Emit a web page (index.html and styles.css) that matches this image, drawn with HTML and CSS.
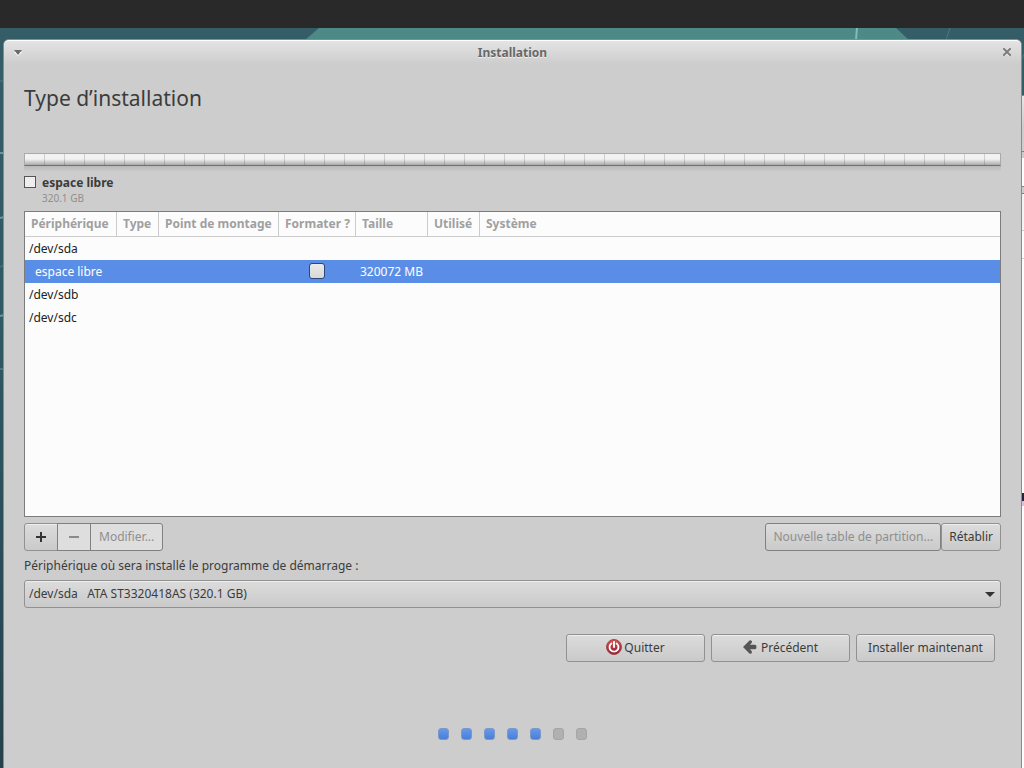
FILE: index.html
```html
<!DOCTYPE html>
<html lang="fr">
<head>
    <meta charset="UTF-8">
    <meta name="viewport" content="width=device-width, initial-scale=1.0">
    <title>Installation</title>
    <link rel="stylesheet" href="styles.css">
</head>
<body>

<div class="panel"></div>

<div class="desktop">
    <!-- Wallpaper -->
    <svg class="wallpaper" viewBox="0 0 1024 740" preserveAspectRatio="none" aria-hidden="true">
        <path d="M305 12 L319 0 H896 L909 12 Z" fill="#4d8a87"/>
        <path d="M857 0 L856 12" stroke="#86bab7" stroke-width="2"/>
        <path d="M950 0 L946 12 M1024 26 L1021 34" stroke="#4c777e" stroke-width="1"/>
        <path d="M0 53 H4 M0 239 L4 237" stroke="#4f7b82" stroke-width="1"/>
        <path d="M0 125 H4 M0 190 L4 189 M0 288 L4 287" stroke="#6b979c" stroke-width="2"/>
        <path d="M0 341 H4" stroke="#6b979c" stroke-width="1"/>
    </svg>

    <!-- Window hidden behind the installer -->
    <div class="back-window">
        <div class="back-title"></div>
        <div class="back-bar"></div>
        <div class="back-line"></div>
        <div class="back-row"></div>
        <div class="back-mark"></div>
    </div>

    <main class="window">
        <header class="titlebar">
            <button class="title-button" aria-label="Menu">
                <svg width="8" height="6" viewBox="0 0 8 6"><path d="M0 2 H8 L4 6 Z" fill="#fff"/><path d="M0 0 H8 L4 5 Z" fill="#6b6b6b"/></svg>
            </button>
            <span class="title">Installation</span>
            <button class="title-button" aria-label="Fermer">
                <svg width="8" height="9" viewBox="0 0 8 9"><path d="M1 2 L7 8 M7 2 L1 8" stroke="#f4f4f4" stroke-width="2"/><path d="M1 1 L7 7 M7 1 L1 7" stroke="#7c7c7c" stroke-width="2" stroke-linecap="square"/></svg>
            </button>
        </header>

        <div class="content">
            <h1>Type d’installation</h1>

            <div class="disk-bar"></div>
            <div class="disk-shadow"></div>

            <div class="legend">
                <span class="swatch"></span>
                <div>
                    <div class="legend-name">espace libre</div>
                    <div class="legend-size">320.1 GB</div>
                </div>
            </div>

            <div class="table-frame">
                <table>
                    <colgroup>
                        <col class="col-device">
                        <col class="col-type">
                        <col class="col-mount">
                        <col class="col-format">
                        <col class="col-size">
                        <col class="col-used">
                        <col>
                    </colgroup>
                    <thead>
                        <tr>
                            <th>Périphérique</th>
                            <th>Type</th>
                            <th>Point de montage</th>
                            <th>Formater ?</th>
                            <th>Taille</th>
                            <th>Utilisé</th>
                            <th>Système</th>
                        </tr>
                    </thead>
                    <tbody>
                        <tr><td colspan="7">/dev/sda</td></tr>
                        <tr class="selected">
                            <td class="child">espace libre</td>
                            <td></td>
                            <td></td>
                            <td class="check"><input type="checkbox" aria-label="Formater espace libre"></td>
                            <td>320072 MB</td>
                            <td></td>
                            <td></td>
                        </tr>
                        <tr><td colspan="7">/dev/sdb</td></tr>
                        <tr><td colspan="7">/dev/sdc</td></tr>
                    </tbody>
                </table>
            </div>

            <div class="tools">
                <div class="joined">
                    <button class="btn icon-btn" aria-label="Ajouter">
                        <svg width="10" height="10" viewBox="0 0 10 10"><path d="M5 0 V10 M0 5 H10" stroke="#333" stroke-width="2"/></svg>
                    </button>
                    <button class="btn icon-btn" disabled aria-label="Supprimer">
                        <svg width="10" height="10" viewBox="0 0 10 10"><path d="M0 5 H10" stroke="#8b8b8b" stroke-width="2"/></svg>
                    </button>
                    <button class="btn text-btn" disabled>Modifier...</button>
                </div>
                <div class="table-actions">
                    <button class="btn text-btn" disabled>Nouvelle table de partition...</button>
                    <button class="btn text-btn">Rétablir</button>
                </div>
            </div>

            <label class="boot-label" for="bootDevice">Périphérique où sera installé le programme de démarrage :</label>
            <div class="combo">
                <select id="bootDevice">
                    <option>/dev/sda&nbsp;&nbsp; ATA ST3320418AS (320.1 GB)</option>
                    <option>/dev/sdb</option>
                    <option>/dev/sdc</option>
                </select>
                <svg class="arrow" width="10" height="5" viewBox="0 0 10 5" aria-hidden="true"><path d="M0 0 H10 L5 5 Z" fill="#333"/></svg>
            </div>

            <div class="nav">
                <button class="btn text-btn">
                    <svg class="quit-icon" width="16" height="16" viewBox="0 0 16 16">
                        <defs>
                            <linearGradient id="red" x1="0" y1="0" x2="0" y2="1">
                                <stop offset="0" stop-color="#d9534a"/>
                                <stop offset="1" stop-color="#8e1f38"/>
                            </linearGradient>
                        </defs>
                        <circle cx="8" cy="8" r="7.5" fill="url(#red)" stroke="#a5444a"/>
                        <path d="M5.4 4.4 A4.5 4.5 0 1 0 10.6 4.4" fill="none" stroke="#fff" stroke-width="1.8" stroke-linecap="round"/>
                        <path d="M8 3 V8" stroke="#fff" stroke-width="2" stroke-linecap="round"/>
                    </svg>
                    <span>Quitter</span>
                </button>
                <button class="btn text-btn">
                    <svg class="back-icon" width="14" height="14" viewBox="0 0 14 14">
                        <path d="M0 7 L6.5 .5 Q7.5 -.2 8.5 .8 Q9.5 2 8.5 3 L7 4.8 H12 Q13.5 4.8 13.5 7 Q13.5 9.2 12 9.2 H7 L8.5 11 Q9.5 12 8.5 13.2 Q7.5 14.2 6.5 13.5 Z" fill="#555"/>
                    </svg>
                    <span>Précédent</span>
                </button>
                <button class="btn text-btn">Installer maintenant</button>
            </div>

            <div class="steps">
                <span class="step done"></span>
                <span class="step done"></span>
                <span class="step done"></span>
                <span class="step done"></span>
                <span class="step done"></span>
                <span class="step"></span>
                <span class="step"></span>
            </div>
        </div>
    </main>
</div>

</body>
</html>
```
FILE: styles.css
```css
* {
    box-sizing: border-box;
}

body {
    margin: 0;
    min-height: 100vh;
    display: flex;
    flex-direction: column;
    font-family: "Noto Sans", "Open Sans", sans-serif;
    font-size: 12px;
    line-height: 17px;
    color: #3c3c3c;
}

svg {
    display: block;
}

.panel {
    height: 28px;
    background: #292929;
}

.desktop {
    position: relative;
    flex: 1;
    display: flex;
    padding: 11px 2px 0 3px;
    overflow: hidden;
    background: linear-gradient(#355d68, #2f5963 40%, #25424c);
}

.wallpaper {
    position: absolute;
    top: 0;
    left: 0;
    width: 100%;
    height: 100%;
}

/* Window behind, only its edge is visible */
.back-window {
    position: absolute;
    top: 67px;
    right: 0;
    bottom: 0;
    width: 20px;
    background: #fcfcfc;
    border-top: 1px solid #8a8a8a;
}

.back-title {
    height: 62px;
    background: linear-gradient(#e6e6e6, #cdcdcd 30px);
    border-bottom: 6px solid #cdcdcd;
    box-shadow: inset 0 -1px #808080;
}

.back-bar {
    height: 35px;
    border-bottom: 6px solid #cdcdcd;
    box-shadow: 0 1px #808080, inset 0 -1px #808080;
}

.back-line {
    height: 37px;
    margin-top: 1px;
    background: #f3f3f3;
    border-bottom: 1px solid #cdcdcd;
}

.back-row {
    height: 28px;
    border-bottom: 1px solid #cdcdcd;
}

.back-mark {
    height: 13px;
    margin-top: 234px;
    background: #24243c;
    border-bottom: 5px solid #e3b9e3;
}

.window {
    position: relative;
    flex: 1;
    display: flex;
    flex-direction: column;
    background: #cdcdcd;
    border: 1px solid #8a8a8a;
    border-bottom: 0;
    border-radius: 6px 6px 0 0;
}

.titlebar {
    display: flex;
    align-items: center;
    justify-content: space-between;
    height: 24px;
    padding: 0 10px;
    border-top: 1px solid #fff;
    border-radius: 5px 5px 0 0;
    background: linear-gradient(#e4e4e4, #cdcdcd);
}

.title {
    font-weight: bold;
    color: #686868;
    text-shadow: 0 1px #eee;
}

.title-button {
    padding: 0;
    border: 0;
    background: none;
}

.content {
    flex: 1;
    display: flex;
    flex-direction: column;
    padding: 20px 20px 28px;
}

h1 {
    margin: 0 0 41px;
    font-size: 21px;
    font-weight: normal;
    line-height: 28px;
}

/* Partition bar */
.disk-bar {
    height: 13px;
    border: 1px solid #aaa;
    border-bottom-color: #707070;
    background:
        repeating-linear-gradient(90deg, transparent 0 19px, rgba(0, 0, 0, 0.15) 19px 20px),
        linear-gradient(#f2f2f2 45%, #aaa);
}

.disk-shadow {
    height: 8px;
    background: linear-gradient(#b9b9b9, #cdcdcd 6px);
}

.legend {
    display: flex;
    gap: 6px;
}

.swatch {
    width: 12px;
    height: 12px;
    margin-top: 2px;
    border: 1px solid #555;
    background: #eee;
}

.legend-name {
    font-weight: bold;
}

.legend-size {
    font-size: 10px;
    line-height: 14px;
    color: #8f8f8f;
}

.table-frame {
    flex: 1;
    margin-top: 6px;
    border: 1px solid #7c7c7c;
    background: #fcfcfc;
}

table {
    width: 100%;
    border-collapse: separate;
    border-spacing: 0;
    table-layout: fixed;
    color: #222;
}

.col-device {
    width: 92px;
}

.col-type {
    width: 42px;
}

.col-mount {
    width: 120px;
}

.col-format {
    width: 77px;
}

.col-size {
    width: 72px;
}

.col-used {
    width: 52px;
}

th {
    height: 25px;
    padding: 0 6px 2px;
    text-align: left;
    white-space: nowrap;
    color: #a0a0a0;
    border-right: 1px solid #cbcbcb;
    border-bottom: 1px solid #cbcbcb;
}

th:last-child {
    border-right: 0;
}

td {
    height: 23px;
    padding: 0 4px;
    white-space: nowrap;
}

.child {
    padding-left: 10px;
}

.check {
    padding: 0 6px 2px 4px;
}

.selected {
    background: #5a8ee6;
    color: #fff;
}

input[type="checkbox"] {
    appearance: none;
    display: block;
    width: 16px;
    height: 16px;
    margin: 0 auto;
    border: 1px solid #2d4878;
    border-radius: 3px;
    background: linear-gradient(#eaeaea, #d8d8d8);
}

/* Buttons */
.btn {
    display: flex;
    align-items: center;
    justify-content: center;
    height: 28px;
    padding: 0;
    border: 1px solid #919191;
    border-radius: 3px;
    background: linear-gradient(#dcdcdc, #cacaca);
    box-shadow: inset 0 1px #eee;
    color: #3c3c3c;
    font: inherit;
}

.btn:disabled {
    border-color: #808080;
    box-shadow: none;
    color: #8f8f8f;
}

.icon-btn {
    width: 34px;
}

.text-btn {
    padding: 0 8px 2px;
}

.tools {
    display: flex;
    justify-content: space-between;
    margin-top: 6px;
}

.joined,
.table-actions {
    display: flex;
}

.table-actions .btn {
    padding: 0 7px 2px;
}

.joined .btn:disabled {
    margin-left: -1px;
    background: #dedede;
}

.joined .btn:not(:last-child) {
    border-top-right-radius: 0;
    border-bottom-right-radius: 0;
}

.joined .btn:not(:first-child) {
    border-top-left-radius: 0;
    border-bottom-left-radius: 0;
}

.boot-label {
    margin: 6px 0;
}

.combo {
    position: relative;
}

.combo select {
    appearance: none;
    display: block;
    width: 100%;
    height: 28px;
    padding: 0 24px 2px 4px;
    border: 1px solid #919191;
    border-radius: 3px;
    background: linear-gradient(#dcdcdc, #cacaca);
    box-shadow: inset 0 1px #eee;
    color: #3c3c3c;
    font: inherit;
}

.arrow {
    position: absolute;
    top: 12px;
    right: 6px;
    pointer-events: none;
}

.nav {
    display: flex;
    justify-content: flex-end;
    gap: 6px;
    margin: 26px 6px 0 0;
}

.nav .btn {
    width: 139px;
}

.quit-icon {
    margin-right: 2px;
}

.back-icon {
    margin-right: 4px;
}

/* Progress dots */
.steps {
    display: flex;
    justify-content: center;
    gap: 12px;
    margin-top: 66px;
}

.step {
    width: 11px;
    height: 12px;
    border: 1px solid #a5a5a5;
    border-radius: 3px;
    background: #b0b0b0;
}

.step.done {
    border-color: #7d98c6;
    background: linear-gradient(#6599ec, #4a7fd8);
}
```
